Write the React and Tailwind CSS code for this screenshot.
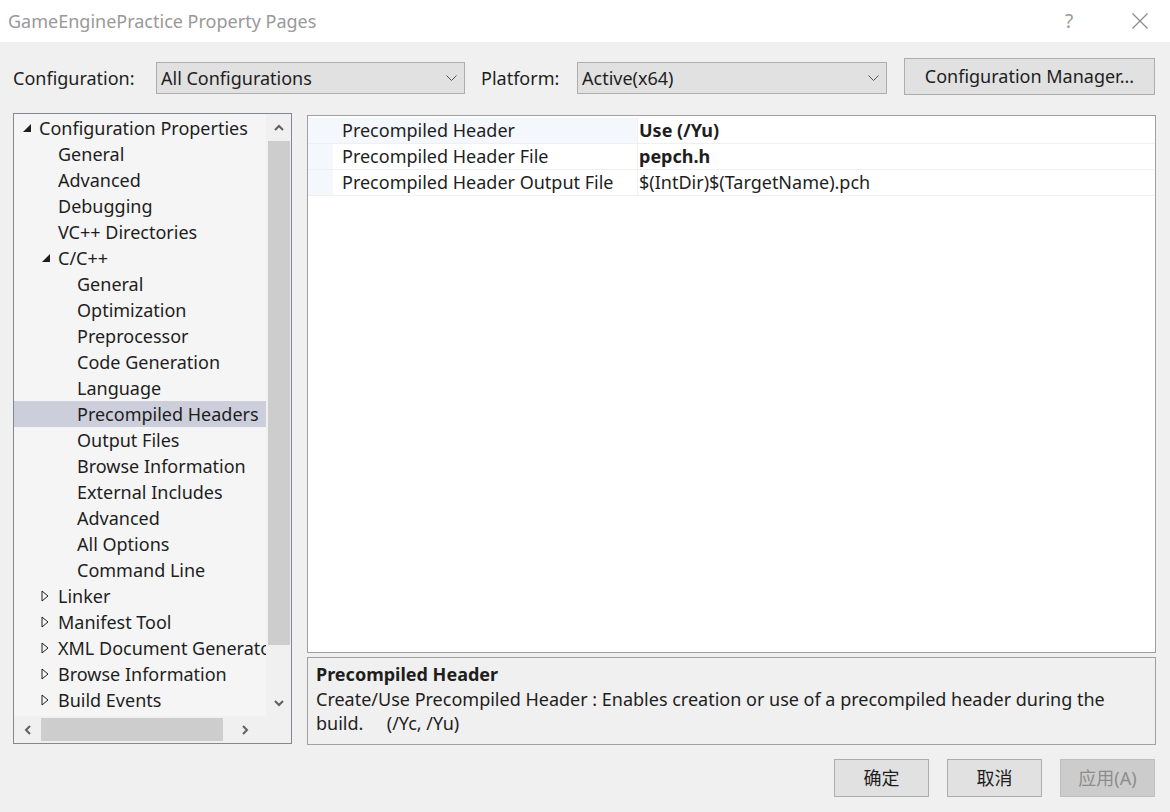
import React from 'react';

const font = { fontFamily: '"Noto Sans", "Noto Sans CJK SC", sans-serif' };

const tree = [
  { label: 'Configuration Properties', level: 0, arrow: 'open' },
  { label: 'General', level: 1 },
  { label: 'Advanced', level: 1 },
  { label: 'Debugging', level: 1 },
  { label: 'VC++ Directories', level: 1 },
  { label: 'C/C++', level: 1, arrow: 'open' },
  { label: 'General', level: 2 },
  { label: 'Optimization', level: 2 },
  { label: 'Preprocessor', level: 2 },
  { label: 'Code Generation', level: 2 },
  { label: 'Language', level: 2 },
  { label: 'Precompiled Headers', level: 2, selected: true },
  { label: 'Output Files', level: 2 },
  { label: 'Browse Information', level: 2 },
  { label: 'External Includes', level: 2 },
  { label: 'Advanced', level: 2 },
  { label: 'All Options', level: 2 },
  { label: 'Command Line', level: 2 },
  { label: 'Linker', level: 1, arrow: 'closed' },
  { label: 'Manifest Tool', level: 1, arrow: 'closed' },
  { label: 'XML Document Generator', level: 1, arrow: 'closed' },
  { label: 'Browse Information', level: 1, arrow: 'closed' },
  { label: 'Build Events', level: 1, arrow: 'closed' },
];

const props = [
  { name: 'Precompiled Header', value: 'Use (/Yu)', bold: true, active: true },
  { name: 'Precompiled Header File', value: 'pepch.h', bold: true },
  { name: 'Precompiled Header Output File', value: '$(IntDir)$(TargetName).pch' },
];

const Chevron = ({ dir }) => {
  const paths = {
    up: 'M1 6 L5 2 L9 6',
    down: 'M1 2 L5 6 L9 2',
    left: 'M6 1 L2 5 L6 9',
    right: 'M2 1 L6 5 L2 9',
  };
  const vertical = dir === 'up' || dir === 'down';
  return (
    <svg width={vertical ? 10 : 8} height={vertical ? 8 : 10} viewBox={vertical ? '0 0 10 8' : '0 0 8 10'}>
      <path d={paths[dir]} fill="none" stroke="#606060" strokeWidth="2" />
    </svg>
  );
};

const Arrow = ({ type }) => {
  if (type === 'open') {
    return (
      <svg width="10" height="10" viewBox="0 0 10 10">
        <path d="M9 1 L9 9 L1 9 Z" fill="#1e1e1e" />
      </svg>
    );
  }
  return (
    <svg width="8" height="12" viewBox="0 0 8 12">
      <path d="M1 1 L7 6 L1 11 Z" fill="none" stroke="#1e1e1e" strokeWidth="1" />
    </svg>
  );
};

const Select = ({ value, width }) => (
  <div className={`flex h-[32px] items-center justify-between border border-[#adadad] bg-[#e1e1e1] pl-[4px] pr-[7px] ${width}`}>
    <span className="text-[18px] text-[#1e1e1e]">{value}</span>
    <svg width="11" height="6" viewBox="0 0 11 6">
      <path d="M0.5 0.5 L5.5 5.5 L10.5 0.5" fill="none" stroke="#555" strokeWidth="1" />
    </svg>
  </div>
);

const DialogButton = ({ children, disabled }) => (
  <button
    className={`h-[38px] w-[95px] border text-[18px] ${
      disabled ? 'border-[#bfbfbf] bg-[#cccccc] text-[#8c8c8c]' : 'border-[#adadad] bg-[#e1e1e1] text-[#1e1e1e]'
    }`}
  >
    {children}
  </button>
);

export default function App() {
  return (
    <div className="flex h-[812px] w-[1170px] flex-col bg-[#f0f0f0] text-[#1e1e1e]" style={font}>
      {/* title bar */}
      <div className="flex h-[42px] items-center justify-between bg-white pl-[8px]">
        <span className="text-[18px] text-[#999999]">GameEnginePractice Property Pages</span>
        <div className="flex items-center">
          <span className="w-[82px] text-center text-[19px] text-[#999999]">?</span>
          <svg className="mx-[22px]" width="16" height="16" viewBox="0 0 16 16">
            <path d="M0.5 0.5 L15.5 15.5 M15.5 0.5 L0.5 15.5" stroke="#8a8a8a" strokeWidth="1.2" />
          </svg>
        </div>
      </div>

      {/* configuration row */}
      <div className="flex items-center pt-[19px] pl-[13px] pr-[15px]">
        <span className="w-[143px] text-[18px]">Configuration:</span>
        <Select value="All Configurations" width="w-[309px]" />
        <span className="ml-[16px] w-[96px] text-[18px]">Platform:</span>
        <Select value="Active(x64)" width="w-[310px]" />
        <button className="ml-[17px] -mt-[3px] h-[37px] w-[251px] border border-[#adadad] bg-[#e1e1e1] text-[18px]">
          Configuration Manager...
        </button>
      </div>

      {/* main area */}
      <div className="mt-[18px] flex pl-[13px] pr-[14px]">
        {/* tree */}
        <div className="flex h-[631px] w-[279px] flex-col border border-[#828790] bg-[#f0f0f0]">
          <div className="flex flex-1 overflow-hidden">
            <div className="flex-1 overflow-hidden bg-[#f5f5f5] pt-[1px]">
              {tree.map((item, i) => (
                <div
                  key={i}
                  className={`flex h-[26px] items-center whitespace-nowrap text-[18px] ${item.selected ? 'bg-[#cccedb]' : ''}`}
                  style={{ paddingLeft: 8 + item.level * 19 }}
                >
                  <span className="flex w-[17px] shrink-0 items-center">
                    {item.arrow && <Arrow type={item.arrow} />}
                  </span>
                  <span>{item.label}</span>
                </div>
              ))}
            </div>
            {/* vertical scrollbar */}
            <div className="flex w-[25px] flex-col items-center">
              <div className="flex h-[27px] items-center justify-center">
                <Chevron dir="up" />
              </div>
              <div className="h-[504px] w-[22px] bg-[#cdcdcd]" />
              <div className="flex flex-1 items-end justify-center pb-[9px]">
                <Chevron dir="down" />
              </div>
            </div>
          </div>
          {/* horizontal scrollbar */}
          <div className="flex h-[27px] items-center pr-[25px]">
            <div className="flex w-[27px] justify-center">
              <Chevron dir="left" />
            </div>
            <div className="h-[23px] w-[182px] bg-[#cdcdcd]" />
            <div className="flex flex-1 justify-center">
              <Chevron dir="right" />
            </div>
          </div>
        </div>

        {/* right side */}
        <div className="ml-[15px] flex flex-1 flex-col">
          <div className="mt-[2px] h-[538px] border border-[#a0a0a0] bg-white pt-[2px]">
            {props.map((p, i) => (
              <div key={i} className="flex h-[26px] border-b border-[#f0f0f0]">
                <div className="w-[25px] bg-[#f4f7fc]" />
                <div
                  className={`flex w-[305px] items-center border-r border-[#f0f0f0] pl-[9px] text-[18px] ${
                    p.active ? 'bg-[#f4f7fc]' : ''
                  }`}
                >
                  {p.name}
                </div>
                <div className={`flex items-center pl-[1px] text-[18px] ${p.bold ? 'font-bold' : ''}`}>{p.value}</div>
              </div>
            ))}
          </div>
          <div className="mt-[4px] h-[88px] border border-[#a0a0a0] px-[8px] pt-[3px]">
            <div className="text-[18px] font-bold leading-[26px]">Precompiled Header</div>
            <div className="text-[18px] leading-[24px]">
              Create/Use Precompiled Header : Enables creation or use of a precompiled header during the build.
              &nbsp;&nbsp;&nbsp;&nbsp;(/Yc, /Yu)
            </div>
          </div>
        </div>
      </div>

      {/* footer buttons */}
      <div className="mt-[14px] flex justify-end gap-[18px] pr-[15px]">
        <DialogButton>确定</DialogButton>
        <DialogButton>取消</DialogButton>
        <DialogButton disabled>应用(A)</DialogButton>
      </div>
    </div>
  );
}
